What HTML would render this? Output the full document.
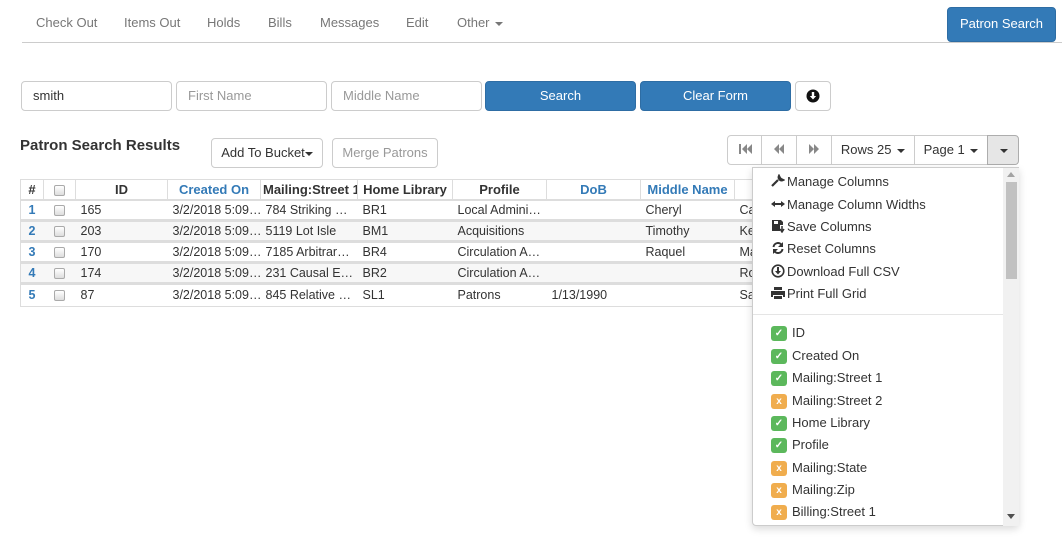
<!DOCTYPE html>
<html><head><style>
*{box-sizing:border-box;margin:0;padding:0}
body{width:1062px;height:538px;position:relative;background:#fff;font-family:"Liberation Sans",sans-serif;font-size:13px;color:#333;overflow:hidden}
.a{position:absolute}
.nav{top:15px;color:#777;font-size:13px}
.inp{position:absolute;top:81px;height:30px;width:151px;border:1px solid #ccc;border-radius:4px;padding:6px 11px;font-size:13px;color:#999}
.btnp{position:absolute;background:#337ab7;border:1px solid #2e6da4;border-radius:4px;color:#fff;text-align:center;font-size:13px}
.btn{position:absolute;border:1px solid #ccc;border-radius:4px;background:#fff;text-align:center;font-size:13px}
table{border-collapse:collapse;position:absolute;left:20px;top:179px;font-size:12.5px;table-layout:fixed;width:800px}
td,th{height:21px;padding:0 5px;white-space:nowrap;overflow:hidden}
th{border:1px solid #ddd;border-bottom:2px solid #ddd;text-align:center;font-weight:bold;height:20px;font-size:13px}
th.l{color:#337ab7}
tr.r td{border-bottom:3px solid #ddd;height:21px}
tr.s td{background:#f7f7f7}
td.n{color:#337ab7;font-weight:bold;text-align:center}
.cb{display:inline-block;width:11px;height:11px;border:1px solid #aaa;border-radius:2px;background:linear-gradient(#fff,#ddd);vertical-align:middle}
.pg{position:absolute;top:135px;height:30px;border:1px solid #ccc;border-left:none;text-align:center;line-height:27px;font-size:13px;color:#333;background:#fff}
.dd{position:absolute;left:752px;top:167px;width:267px;height:359px;border:1px solid #ccc;border-radius:0 0 4px 4px;background:#fff;box-shadow:0 3px 8px rgba(0,0,0,.15)}
.mi{position:absolute;left:18px;font-size:13px;color:#333}
.mi svg{vertical-align:-2px;margin-right:2px}
.ck{position:absolute;left:18px;font-size:13px;color:#333;padding-left:21px;line-height:16px}
.ck i{position:absolute;left:0;top:1px;width:16px;height:15px;border-radius:3px;color:#fff;font-size:10px;font-style:normal;text-align:center;line-height:15px;font-weight:bold}
.g{background:#5cb85c}.o{background:#f0ad4e}
.car{display:inline-block;width:0;height:0;border-left:4px solid transparent;border-right:4px solid transparent;border-top:4px solid #333;vertical-align:middle;margin-left:2px}
</style></head><body>
<div class="a nav" style="left:36px">Check Out</div>
<div class="a nav" style="left:124px">Items Out</div>
<div class="a nav" style="left:207px">Holds</div>
<div class="a nav" style="left:268px">Bills</div>
<div class="a nav" style="left:320px">Messages</div>
<div class="a nav" style="left:406px">Edit</div>
<div class="a nav" style="left:457px">Other <span class="car" style="border-top-color:#777"></span></div>
<div class="a" style="left:22px;top:42px;width:1040px;height:1px;background:#ccc"></div>
<div class="btnp" style="left:947px;top:7px;width:109px;height:35px;line-height:32px">Patron Search</div>

<div class="inp" style="left:21px;color:#333">smith</div>
<div class="inp" style="left:176px">First Name</div>
<div class="inp" style="left:331px">Middle Name</div>
<div class="btnp" style="left:485px;top:81px;width:151px;height:30px;line-height:27px">Search</div>
<div class="btnp" style="left:640px;top:81px;width:151px;height:30px;line-height:27px">Clear Form</div>
<div class="btn" style="left:795px;top:81px;width:36px;height:30px"><svg width="14" height="14" viewBox="0 0 14 14" style="margin-top:7px"><circle cx="7" cy="7" r="6.5" fill="#111"/><path d="M5.8 3h2.4v4h2L7 10.5 3.8 7h2z" fill="#fff"/></svg></div>

<div class="a" style="left:20px;top:137px;font-size:15px;font-weight:bold">Patron Search Results</div>
<div class="btn" style="left:211px;top:138px;width:112px;height:30px;line-height:28px">Add To Bucket<span class="car" style="margin-left:0"></span></div>
<div class="btn" style="left:332px;top:138px;width:106px;height:30px;line-height:28px;color:#999">Merge Patrons</div>

<table>
<colgroup><col style="width:23px"><col style="width:32px"><col style="width:92px"><col style="width:93px"><col style="width:97px"><col style="width:95px"><col style="width:94px"><col style="width:94px"><col style="width:94px"><col style="width:86px"></colgroup>
<tr><th>#</th><th><span class="cb"></span></th><th>ID</th><th class="l">Created On</th><th style="padding:0 2px">Mailing:Street 1</th><th>Home Library</th><th>Profile</th><th class="l">DoB</th><th class="l">Middle Name</th><th class="l">First</th></tr>
<tr class="r"><td class="n">1</td><td style="text-align:center"><span class="cb"></span></td><td>165</td><td>3/2/2018 5:09…</td><td>784 Striking …</td><td>BR1</td><td>Local Admini…</td><td></td><td>Cheryl</td><td>Ca</td></tr>
<tr class="r s"><td class="n">2</td><td style="text-align:center"><span class="cb"></span></td><td>203</td><td>3/2/2018 5:09…</td><td>5119 Lot Isle</td><td>BM1</td><td>Acquisitions</td><td></td><td>Timothy</td><td>Ke</td></tr>
<tr class="r"><td class="n">3</td><td style="text-align:center"><span class="cb"></span></td><td>170</td><td>3/2/2018 5:09…</td><td>7185 Arbitrar…</td><td>BR4</td><td>Circulation A…</td><td></td><td>Raquel</td><td>Ma</td></tr>
<tr class="r s"><td class="n">4</td><td style="text-align:center"><span class="cb"></span></td><td>174</td><td>3/2/2018 5:09…</td><td>231 Causal E…</td><td>BR2</td><td>Circulation A…</td><td></td><td></td><td>Ro</td></tr>
<tr><td class="n">5</td><td style="text-align:center"><span class="cb"></span></td><td>87</td><td>3/2/2018 5:09…</td><td>845 Relative …</td><td>SL1</td><td>Patrons</td><td>1/13/1990</td><td></td><td>Sa</td></tr>
</table>
<div class="a" style="left:20px;top:306px;width:733px;height:1px;background:#ddd"></div>
<div class="a" style="left:20px;top:179px;width:1px;height:128px;background:#ddd"></div>

<div class="pg" style="left:727px;width:35px;border-left:1px solid #ccc;border-radius:4px 0 0 4px"><svg width="14" height="10" viewBox="0 0 14 10"><path d="M1 0h2v10H1zM9 0v10L4 5zM14 0v10L9 5z" fill="#888"/></svg></div>
<div class="pg" style="left:762px;width:35px"><svg width="12" height="10" viewBox="0 0 12 10"><path d="M6 0v10L1 5zM11 0v10L6 5z" fill="#888"/></svg></div>
<div class="pg" style="left:797px;width:35px"><svg width="12" height="10" viewBox="0 0 12 10"><path d="M1 0v10l5-5zM6 0v10l5-5z" fill="#888"/></svg></div>
<div class="pg" style="left:832px;width:83px">Rows 25 <span class="car"></span></div>
<div class="pg" style="left:915px;width:73px">Page 1 <span class="car"></span></div>
<div class="pg" style="left:987px;width:32px;background:#e6e6e6;border-color:#adadad;border-left:1px solid #adadad;border-radius:0 4px 4px 0"><span class="car"></span></div>

<div class="dd">
<div class="mi" style="top:6px"><svg width="14" height="14" viewBox="0 0 14 14"><path d="M1 12l6-6M8 2a3 3 0 0 0 4 4L10 5 9 4z" stroke="#333" stroke-width="2.2" fill="#333"/></svg>Manage Columns</div>
<div class="mi" style="top:29px"><svg width="14" height="14" viewBox="0 0 14 14"><path d="M0 7l4-3v2h6V4l4 3-4 3V8H4v2z" fill="#333"/></svg>Manage Column Widths</div>
<div class="mi" style="top:51px"><svg width="14" height="14" viewBox="0 0 14 14"><path d="M1 1h9l2 2v3H9v6H1z" fill="#333"/><path d="M11 7v5M9 10l2 3 2-3" stroke="#333" stroke-width="1.5" fill="none"/><rect x="3" y="2" width="4" height="3" fill="#fff"/></svg>Save Columns</div>
<div class="mi" style="top:73px"><svg width="14" height="14" viewBox="0 0 14 14"><path d="M2.5 6A4.5 4.5 0 0 1 11 4.5M11.5 8A4.5 4.5 0 0 1 3 9.5" stroke="#333" stroke-width="2" fill="none"/><path d="M12 1v5H7zM2 13V8h5z" fill="#333"/></svg>Reset Columns</div>
<div class="mi" style="top:96px"><svg width="14" height="14" viewBox="0 0 14 14"><circle cx="7" cy="7" r="5.8" stroke="#333" stroke-width="1.6" fill="none"/><path d="M6 3h2v4h2L7 10.5 4 7h2z" fill="#333"/></svg>Download Full CSV</div>
<div class="mi" style="top:118px"><svg width="14" height="14" viewBox="0 0 14 14"><path d="M3 1h8v3H3zM0 5h14v6h-2V9H2v2H0zM3 10h8v3H3z" fill="#333"/></svg>Print Full Grid</div>
<div class="a" style="left:0;top:146px;width:250px;height:1px;background:#e5e5e5"></div>
<div class="ck" style="top:157px"><i class="g">✓</i>ID</div>
<div class="ck" style="top:180px"><i class="g">✓</i>Created On</div>
<div class="ck" style="top:202px"><i class="g">✓</i>Mailing:Street 1</div>
<div class="ck" style="top:225px"><i class="o">x</i>Mailing:Street 2</div>
<div class="ck" style="top:247px"><i class="g">✓</i>Home Library</div>
<div class="ck" style="top:269px"><i class="g">✓</i>Profile</div>
<div class="ck" style="top:292px"><i class="o">x</i>Mailing:State</div>
<div class="ck" style="top:314px"><i class="o">x</i>Mailing:Zip</div>
<div class="ck" style="top:336px"><i class="o">x</i>Billing:Street 1</div>
<div class="a" style="left:250px;top:0;width:16px;height:358px;background:#f1f1f1"></div>
<div class="a" style="left:253px;top:14px;width:11px;height:97px;background:#c1c1c1"></div>
<div class="a" style="left:254px;top:4px;border-left:4px solid transparent;border-right:4px solid transparent;border-bottom:5px solid #a3a3a3"></div>
<div class="a" style="left:254px;top:346px;border-left:4px solid transparent;border-right:4px solid transparent;border-top:5px solid #505050"></div>
</div>
</body></html>
